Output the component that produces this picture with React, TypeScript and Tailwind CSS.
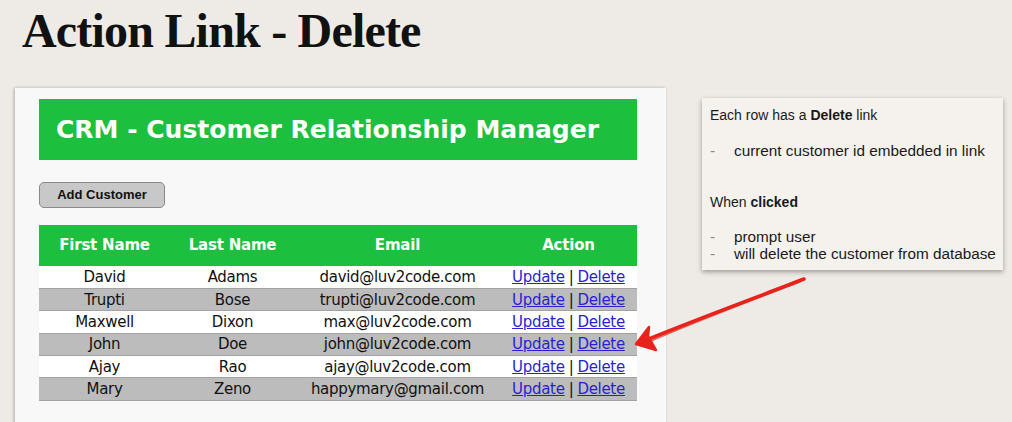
const customers = [
  { first: 'David', last: 'Adams', email: 'david@luv2code.com' },
  { first: 'Trupti', last: 'Bose', email: 'trupti@luv2code.com' },
  { first: 'Maxwell', last: 'Dixon', email: 'max@luv2code.com' },
  { first: 'John', last: 'Doe', email: 'john@luv2code.com' },
  { first: 'Ajay', last: 'Rao', email: 'ajay@luv2code.com' },
  { first: 'Mary', last: 'Zeno', email: 'happymary@gmail.com' },
];

function RedArrow() {
  return (
    <svg className="absolute left-0 top-0 pointer-events-none" width="1012" height="422" viewBox="0 0 1012 422">
      <g fill="none" stroke="#e8221c" strokeLinecap="round" strokeLinejoin="round">
        <path d="M804 279 C760 296 700 318 646 340" strokeWidth="3.5" />
        <path d="M801 281 C758 298 698 320 648 342" strokeWidth="2" opacity="0.7" />
      </g>
      <path d="M636 344 L649 327 L648 336 L656 350 Z" fill="#e8221c" stroke="#e8221c" strokeWidth="2.5" strokeLinejoin="round" />
    </svg>
  );
}

export default function App() {
  return (
    <div className="relative w-[1012px] h-[422px] overflow-hidden bg-[#eeebe6]">
      <h1 className="pl-[22px] pt-[5px] h-[88px] text-[48px] leading-[52px] font-bold text-[#111] tracking-[-0.8px] [font-family:'Liberation_Serif',serif]">
        Action Link - Delete
      </h1>

      <div className="flex items-start">
        <div className="ml-[15px] w-[651px] h-[340px] bg-[#f8f8f8] shadow-[-1px_0_3px_rgba(0,0,0,0.25)] pt-[11px] px-[24px] [font-family:'DejaVu_Sans',sans-serif]">
          <div className="h-[61px] w-[598px] bg-[#1dbf3e] flex items-center pl-[17px]">
            <span className="text-white font-bold text-[25px]">CRM - Customer Relationship Manager</span>
          </div>

          <button className="mt-[22px] h-[26px] w-[126px] rounded-[5px] border border-[#8a8a8a] bg-[#c8c8c8] text-[13px] font-bold text-[#111] [font-family:'Liberation_Sans',sans-serif]">
            Add Customer
          </button>

          <table className="mt-[17px] w-[598px] border-collapse text-[15px] tracking-[-0.3px] text-[#111]">
            <thead>
              <tr className="h-[41px] bg-[#1dbf3e] text-white text-[15px] tracking-[-0.2px]">
                <th className="w-[131px] font-bold">First Name</th>
                <th className="w-[125px] font-bold">Last Name</th>
                <th className="w-[205px] font-bold">Email</th>
                <th className="w-[137px] font-bold">Action</th>
              </tr>
            </thead>
            <tbody>
              {customers.map((c, i) => (
                <tr
                  key={c.email}
                  className={
                    i % 2 === 1
                      ? 'h-[22.4px] bg-[#bcbcbc] border-y border-[#a2a2a2]'
                      : 'h-[22.4px] bg-white'
                  }
                >
                  <td className="text-center leading-[20px]">{c.first}</td>
                  <td className="text-center leading-[20px]">{c.last}</td>
                  <td className="text-center leading-[20px]">{c.email}</td>
                  <td className="text-center leading-[20px]">
                    <a href="#" className="text-[#2a1fd6] underline">Update</a>
                    <span className="mx-[4px]">|</span>
                    <a href="#" className="text-[#2a1fd6] underline">Delete</a>
                  </td>
                </tr>
              ))}
            </tbody>
          </table>
        </div>

        <div className="ml-[36px] mt-[10px] w-[301px] h-[172px] bg-[#f5f2ee] shadow-[0_2px_5px_rgba(0,0,0,0.35)] pl-[8px] pt-[9px] text-[14px] leading-[17px] text-[#1a1a1a] [font-family:'Liberation_Sans',sans-serif]">
          <p>Each row has a <b>Delete</b> link</p>
          <div className="mt-[18px] flex text-[15.3px] leading-[18px]">
            <span className="w-[24px] text-[#888]">-</span>
            <span>current customer id embedded in link</span>
          </div>
          <p className="mt-[34px]">When <b>clicked</b></p>
          <div className="mt-[17px] flex text-[15.3px] leading-[17px]">
            <span className="w-[24px] text-[#888]">-</span>
            <span>prompt user</span>
          </div>
          <div className="flex text-[15.3px] leading-[17px]">
            <span className="w-[24px] text-[#888]">-</span>
            <span>will delete the customer from database</span>
          </div>
        </div>
      </div>

      <RedArrow />
    </div>
  );
}
